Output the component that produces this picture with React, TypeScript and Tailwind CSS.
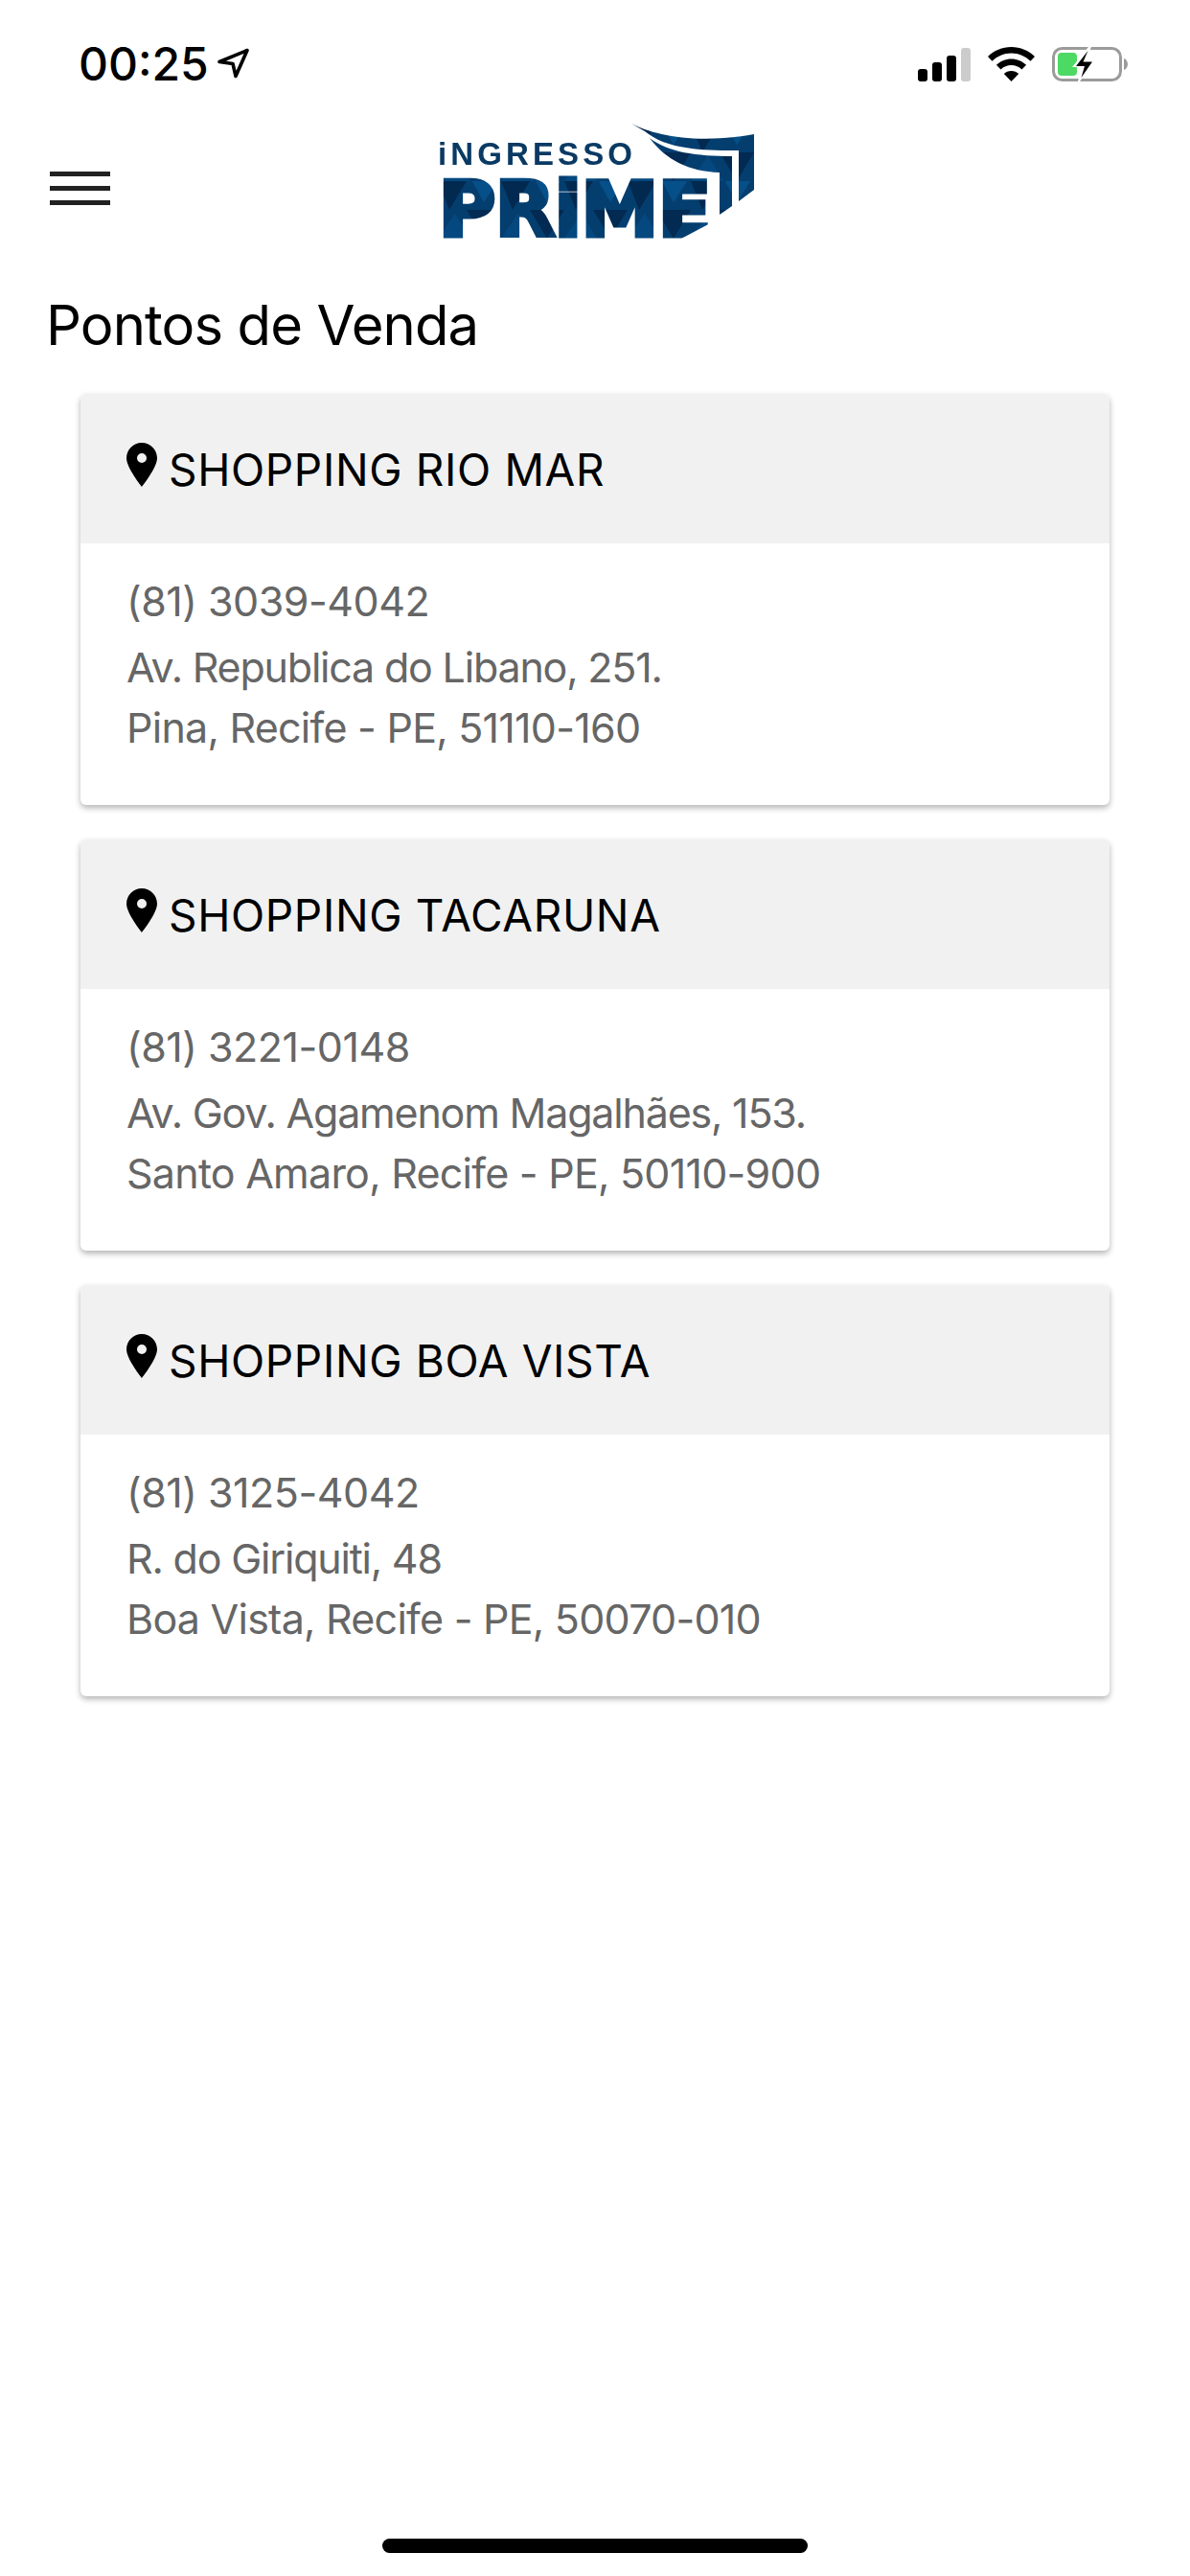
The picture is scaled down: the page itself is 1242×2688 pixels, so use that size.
const stores = [
  {
    name: 'SHOPPING RIO MAR',
    phone: '(81) 3039-4042',
    street: 'Av. Republica do Libano, 251.',
    city: 'Pina, Recife - PE, 51110-160',
  },
  {
    name: 'SHOPPING TACARUNA',
    phone: '(81) 3221-0148',
    street: 'Av. Gov. Agamenom Magalhães, 153.',
    city: 'Santo Amaro, Recife - PE, 50110-900',
  },
  {
    name: 'SHOPPING BOA VISTA',
    phone: '(81) 3125-4042',
    street: 'R. do Giriquiti, 48',
    city: 'Boa Vista, Recife - PE, 50070-010',
  },
];

function StatusBar() {
  return (
    <div className="flex h-[124px] shrink-0 items-center justify-between pt-[10px] pl-[82px] pr-[65px]">
      <div className="flex items-center gap-[9px]">
        <span className="text-[48px] font-medium leading-none text-black">00:25</span>
        {/* location arrow */}
        <svg width="34" height="32" viewBox="0 0 34 32" fill="none" className="mt-[-2px]">
          <path
            d="M2 14.500 31 2.500 19 29.500 16 16.500z"
            stroke="#000"
            strokeWidth="3.600"
            strokeLinejoin="round"
          />
        </svg>
      </div>
      <div className="flex items-center gap-[18px]">
        {/* signal */}
        <div className="flex h-[36px] items-end gap-[5px]">
          <div className="h-[13px] w-[10px] rounded-[3px] bg-black" />
          <div className="h-[20px] w-[10px] rounded-[3px] bg-black" />
          <div className="h-[27px] w-[10px] rounded-[3px] bg-black" />
          <div className="h-[35px] w-[10px] rounded-[3px] bg-[#cccccc]" />
        </div>
        {/* wifi */}
        <svg width="49" height="36" viewBox="0 0 49 36">
          <path d="M24.500 0C15 0 6.500 3.700 0 10l4.500 4.800C9.800 9.700 16.800 6.500 24.500 6.500S39.200 9.700 44.500 14.800L49 10C42.500 3.700 34 0 24.500 0z" />
          <path d="M24.500 12.500c-6 0-11.500 2.400-15.600 6.300l4.600 4.800c2.900-2.800 6.800-4.500 11-4.500s8.100 1.700 11 4.500l4.600-4.800C36 14.900 30.500 12.500 24.500 12.500z" />
          <path d="M24.500 25c-3 0-5.700 1.100-7.700 3l7.700 8 7.700-8c-2-1.900-4.700-3-7.700-3z" />
        </svg>
        {/* battery, charging */}
        <svg width="79" height="36" viewBox="0 0 79 36">
          <rect x="1.500" y="1.500" width="70" height="33" rx="9" fill="none" stroke="#9b9b9b" strokeWidth="3" />
          <path d="M75 12c2.400.8 4 3 4 6s-1.600 5.200-4 6z" fill="#9b9b9b" />
          <rect x="6" y="6" width="20" height="24" rx="4" fill="#4cd964" />
          <path d="M38 0 21 21h10l-4 15h2l16-22H35l6-14z" fill="#fff" />
          <path d="M37.500 4 25 20h9l-3.500 12L42 15.500h-9.500z" fill="#000" />
        </svg>
      </div>
    </div>
  );
}

function Logo() {
  // wordmark filled with a faceted navy texture, wing folds on the right
  return (
    <svg width="330" height="120" viewBox="0 0 330 120" className="overflow-visible blur-[0.6px]">
      <defs>
        <pattern id="facets" width="66" height="60" patternUnits="userSpaceOnUse">
          <rect width="66" height="60" fill="#043e6f" />
          <path d="M0 0h30L12 30z" fill="#02294f" />
          <path d="M30 30h36L48 60z" fill="#022a52" />
          <path d="M0 60l18-26 16 26z" fill="#05487f" />
          <path d="M36 0h26L48 22z" fill="#06508a" />
        </pattern>
      </defs>
      <text
        x="0"
        y="43"
        fontFamily="'Liberation Sans', sans-serif"
        fontSize="33"
        fontWeight="700"
        fill="#0a3a63"
        textLength="203"
        lengthAdjust="spacing"
      >
        iNGRESSO
      </text>
      <text
        x="1"
        y="117"
        fontFamily="'DejaVu Sans', sans-serif"
        fontSize="79"
        fontWeight="700"
        fill="url(#facets)"
        stroke="url(#facets)"
        strokeWidth="5"
        textLength="284"
        lengthAdjust="spacingAndGlyphs"
      >
        PRiME
      </text>
      {/* chamfered foot of the E */}
      <path d="M288 102v18h-34z" fill="#fff" />
      <path d="M202 0C225 12 270 22 330 11V69L314 81V28C280 28 240 28 216 8z" fill="url(#facets)" />
      <path d="M221 15C240 30 270 34 307 34V86L294 95V51C262 50 238 38 221 15z" fill="url(#facets)" />
    </svg>
  );
}

function PinIcon() {
  return (
    <svg width="32" height="46" viewBox="0 0 32 46" className="mt-[-8px] shrink-0">
      <path
        fillRule="evenodd"
        d="M16 0C7.200 0 0 7.200 0 16c0 10 16 30 16 30s16-20 16-30C32 7.200 24.800 0 16 0zm0 11a5 5 0 1 1 0 10 5 5 0 0 1 0-10z"
      />
    </svg>
  );
}

function StoreCard({ store }: { store: (typeof stores)[number] }) {
  return (
    <div className="h-[429px] overflow-hidden rounded-[6px] bg-white shadow-[0_3px_6px_rgba(0,0,0,0.3)]">
      <div className="flex h-[156px] items-center gap-[12px] bg-[#f1f1f1] pl-[48px]">
        <PinIcon />
        <span className="mt-[2px] text-[46px] leading-none tracking-[0.65px] text-black">{store.name}</span>
      </div>
      <div className="pt-[25px] pl-[48px] text-[43px] text-[#666666]">
        <p className="mb-[3px] leading-[70px] tracking-[-0.5px]">{store.phone}</p>
        <p className="leading-[63px] tracking-[-1.2px]">{store.street}</p>
        <p className="leading-[63px] tracking-[-0.75px]">{store.city}</p>
      </div>
    </div>
  );
}

export default function App() {
  return (
    <div className="flex h-[2688px] w-[1242px] flex-col overflow-hidden bg-white font-['Inter',sans-serif]">
      <StatusBar />
      {/* toolbar: menu button with the logo centred over it */}
      <div className="relative flex h-[144px] shrink-0 items-center pl-[52px]">
        <div className="flex w-[63px] flex-col gap-[10px]">
          <div className="h-[5px] bg-[#222222]" />
          <div className="h-[5px] bg-[#222222]" />
          <div className="h-[5px] bg-[#222222]" />
        </div>
        <div className="absolute left-[457px] top-[5px]">
          <Logo />
        </div>
      </div>
      <h1 className="mt-[40px] pl-[48px] text-[58px] font-normal leading-[62px] tracking-[-0.9px] text-black">Pontos de Venda</h1>
      <div className="mt-[41px] flex flex-col gap-[36px] pl-[84px] pr-[84px]">
        {stores.map((store) => (
          <StoreCard key={store.name} store={store} />
        ))}
      </div>
      <div className="mt-auto mb-[24px] h-[15px] w-[444px] self-center rounded-full bg-black" />
    </div>
  );
}
